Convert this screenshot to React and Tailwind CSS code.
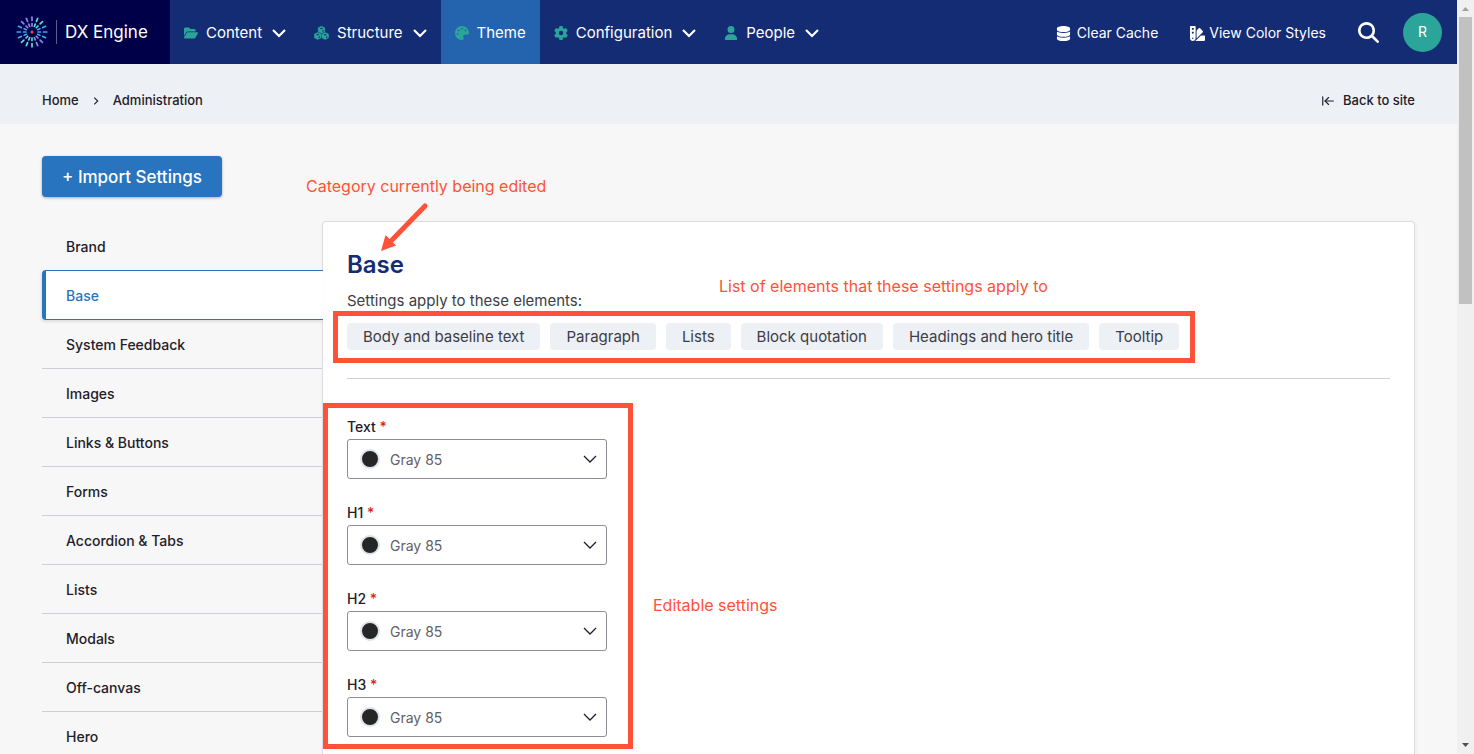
import { FaDatabase, FaFolderOpen, FaGear, FaMagnifyingGlass, FaPalette, FaSwatchbook, FaUser } from 'react-icons/fa6'
import { ArrowLeftToLine } from 'lucide-react'

const NAV = [
  { label: 'Content', icon: FaFolderOpen, menu: true },
  { label: 'Structure', icon: CubesIcon, menu: true },
  { label: 'Theme', icon: FaPalette, active: true },
  { label: 'Configuration', icon: FaGear, menu: true },
  { label: 'People', icon: FaUser, menu: true },
]

const CATEGORIES = [
  'Brand',
  'Base',
  'System Feedback',
  'Images',
  'Links & Buttons',
  'Forms',
  'Accordion & Tabs',
  'Lists',
  'Modals',
  'Off-canvas',
  'Hero',
]

const ELEMENTS = ['Body and baseline text', 'Paragraph', 'Lists', 'Block quotation', 'Headings and hero title', 'Tooltip']

const FIELDS = ['Text', 'H1', 'H2', 'H3']

const PURPLE = '#8f86e8'
const TEAL = '#62dccb'
const BLUE = '#3aa5ee'

// clockwise from the top
const RAYS = [
  PURPLE, TEAL, TEAL, BLUE, BLUE, BLUE, PURPLE, PURPLE,
  TEAL, TEAL, TEAL, BLUE, BLUE, BLUE, PURPLE, PURPLE,
]

function Logo() {
  return (
    <svg className="h-8 w-8" viewBox="-16 -16 32 32" fill="none" strokeWidth="1.7" strokeLinecap="round">
      {RAYS.map((color, i) => (
        <g key={i} transform={`rotate(${i * 22.5})`} stroke={color}>
          <path d="M0-8.500V-6" />
          <path d="M0-14.800V-11.500" />
        </g>
      ))}
      <circle r="1.5" fill="#f0503c" />
    </svg>
  )
}

function CubesIcon({ className }) {
  return (
    <svg className={className} viewBox="0 0 16 15" fill="currentColor">
      {[[8, 4], [4, 10.7], [12, 10.7]].map(([x, y]) => (
        <g key={x} transform={`translate(${x} ${y})`}>
          <path d="M0-3.700 3.500-2V2L0 3.700-3.500 2V-2Z" stroke="currentColor" strokeWidth="0.6" strokeLinejoin="round" />
          <path d="M-2-1.300 0-.4 2-1.300 0-2.200Z M.9.9 2.400.2V1.500L.9 2.200Z" fill="#142c74" />
        </g>
      ))}
    </svg>
  )
}

function Chevron({ className, strokeWidth }) {
  return (
    <svg className={className} viewBox="0 0 14 14" fill="none" stroke="currentColor" strokeWidth={strokeWidth}>
      <path d="m1 4 6 6 6-6" />
    </svg>
  )
}

function Header() {
  return (
    <header className="flex h-16 bg-[#142c74] text-[15px] text-white">
      <a href="#" className="flex w-[170px] shrink-0 items-center gap-2 bg-[#000048] pl-4">
        <Logo />
        <span className="h-6 w-px bg-[#5c5c8c]" />
        <span className="pt-0.5 text-[17px]">DX Engine</span>
      </a>
      <nav className="flex">
        {NAV.map(({ label, icon: Icon, menu, active }) => (
          <a key={label} href="#" className={`flex items-center px-3.5 pt-0.5 ${active ? 'bg-[#2463ad]' : ''}`}>
            <Icon className="mr-2 h-[14px] w-auto text-[#2ba59a]" />
            {label}
            {menu && <Chevron className="ml-2.5 size-[14px]" strokeWidth={2.2} />}
          </a>
        ))}
      </nav>
      <div className="ml-auto flex items-center pr-[15px] text-sm">
        <a href="#" className="flex items-center gap-1.5 pt-0.5">
          <FaDatabase className="size-[15px]" />
          Clear Cache
        </a>
        <a href="#" className="ml-8 flex items-center gap-1 pt-0.5">
          <FaSwatchbook className="size-[15px]" />
          View Color Styles
        </a>
        <button type="button" aria-label="Search" className="ml-8">
          <FaMagnifyingGlass className="size-[21px]" />
        </button>
        <button type="button" className="ml-6 size-[39px] rounded-full bg-[#2ba59a] text-sm">
          R
        </button>
      </div>
    </header>
  )
}

function Breadcrumb() {
  return (
    <div className="flex h-15 items-center justify-between bg-[#edf0f5] px-[42px] pt-3.5 text-[13px] font-medium">
      <nav className="flex items-center gap-3">
        <a href="#">Home</a>
        <Chevron className="size-2.5 -rotate-90 p-px" strokeWidth={2} />
        <a href="#">Administration</a>
      </nav>
      <a href="#" className="flex items-center gap-2">
        <ArrowLeftToLine className="size-3.5" strokeWidth={2} />
        Back to site
      </a>
    </div>
  )
}

function Sidebar() {
  return (
    <nav className="z-10 -mr-px flex w-[281px] shrink-0 flex-col text-sm font-medium">
      {CATEGORIES.map((name) =>
        name === 'Base' ? (
          <a
            key={name}
            href="#"
            className="flex h-[50px] items-center rounded-l-sm border-y border-l-4 border-[#2874bf] bg-white pt-0.5 pl-5 text-[#2874bf] shadow-[-1px_2px_3px_rgba(0,0,0,0.1)]"
          >
            {name}
          </a>
        ) : (
          <a
            key={name}
            href="#"
            className={`mr-px flex h-[49px] items-center pt-0.5 pl-6 ${name === 'Brand' ? '' : 'border-b border-[#cfcfd8]'}`}
          >
            {name}
          </a>
        ),
      )}
    </nav>
  )
}

function ColorField({ label }) {
  const id = `color-${label.toLowerCase()}`

  return (
    <div>
      <label htmlFor={id} className="block text-sm leading-5 font-medium">
        {label} <span className="text-[#e01b24]">*</span>
      </label>
      <div className="relative mt-0.5">
        <select
          id={id}
          className="h-10 w-full appearance-none rounded-[3px] border border-[#8c8c94] bg-white pt-0.5 pl-[42px] text-sm text-[#5f6068]"
        >
          <option>Gray 85</option>
        </select>
        <span className="pointer-events-none absolute top-2.5 left-[13px] size-5 rounded-full border-2 border-[#dfe3ec] bg-[#262626]" />
        <Chevron className="pointer-events-none absolute top-[13px] right-2.5 size-[14px]" strokeWidth={1.3} />
      </div>
    </div>
  )
}

function SettingsPanel() {
  return (
    <main className="relative min-w-0 flex-1 rounded-sm border border-[#dcdde3] bg-white px-6 pt-[25px] shadow-[1px_1px_4px_rgba(0,0,0,0.06)]">
      <h1 className="text-2xl leading-9 font-semibold text-[#142c74]">Base</h1>
      <p className="mt-2 text-[15px] leading-5 text-[#3c3d45]">Settings apply to these elements:</p>
      <div className="relative mt-3 w-fit">
        <ul className="flex gap-2.5 text-[15px] text-[#3c3d45]">
          {ELEMENTS.map((name) => (
            <li key={name} className="flex h-[27px] items-center rounded-sm bg-[#edf0f5] px-4 pt-0.5 whitespace-nowrap">
              {name}
            </li>
          ))}
        </ul>
        <div className="pointer-events-none absolute -top-3 -right-4 -bottom-[13px] -left-3.5 border-5 border-[#ff5238]" />
      </div>
      <hr className="mt-7 border-[#cfcfd8]" />
      <form className="relative mt-[38px] flex w-[260px] flex-col gap-6">
        {FIELDS.map((label) => (
          <ColorField key={label} label={label} />
        ))}
        <div className="pointer-events-none absolute -top-3.5 -right-[26px] -bottom-3 -left-6 border-5 border-[#ff5238]" />
      </form>

      {/* callouts */}
      <div className="pointer-events-none text-base leading-6 whitespace-nowrap text-[#ff5238]">
        <span className="absolute -top-12 -left-[17px]">Category currently being edited</span>
        <span className="absolute top-[52px] left-[396px]">List of elements that these settings apply to</span>
        <span className="absolute top-[371px] left-[330px]">Editable settings</span>
        <svg className="absolute -top-5 left-[54px] h-[52px] w-[54px]" viewBox="0 0 54 52" fill="currentColor">
          <path d="M48 4 14 39" stroke="currentColor" strokeWidth="5" strokeLinecap="round" />
          <path d="M4 49 8.500 33 19 43.500Z" />
        </svg>
      </div>
    </main>
  )
}

function Scrollbar() {
  return (
    <div aria-hidden="true" className="flex w-[17px] shrink-0 flex-col items-center bg-[#f0f0f0]">
      <svg className="h-[17px] w-[17px]" viewBox="0 0 17 17">
        <path d="M5 11h7L8.500 7Z" fill="#a0a0a0" />
      </svg>
      <div className="h-[38%] w-[13px] bg-[#c1c1c1]" />
      <svg className="mt-auto h-[17px] w-[17px]" viewBox="0 0 17 17">
        <path d="M5 6h7L8.500 10Z" fill="#505050" />
      </svg>
    </div>
  )
}

export default function App() {
  return (
    <div className="flex h-screen overflow-hidden bg-[#f7f7f7] font-[Inter,'Noto_Sans',sans-serif] text-[#1f2028]">
      <div className="min-w-0 flex-1">
        <Header />
        <Breadcrumb />
        <div className="px-[42px] pt-8">
          <button
            type="button"
            className="h-[41px] rounded-sm bg-[#2874bf] px-5 pt-0.5 text-[17px] font-medium text-white shadow-[0_1px_3px_rgba(0,0,0,0.3)]"
          >
            + Import Settings
          </button>
          <div className="mt-6 flex">
            <Sidebar />
            <SettingsPanel />
          </div>
        </div>
      </div>
      <Scrollbar />
    </div>
  )
}
